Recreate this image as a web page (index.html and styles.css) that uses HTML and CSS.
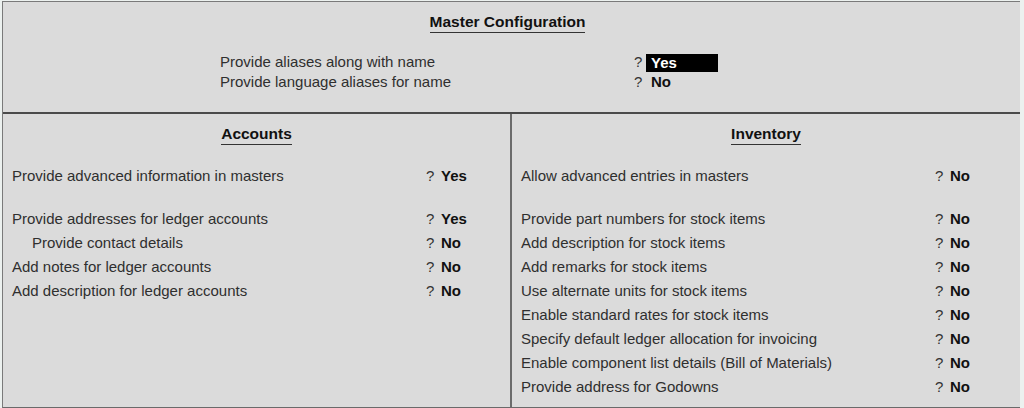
FILE: index.html
```html
<!DOCTYPE html>
<html lang="en">
<head>
<meta charset="utf-8">
<title>Master Configuration</title>
<link rel="stylesheet" href="styles.css">
</head>
<body>
<div class="frame">
  <section class="header">
    <div class="title-wrap"><span class="title">Master Configuration</span></div>
    <div class="hrows">
      <div class="row">
        <span class="label">Provide aliases along with name</span>
        <span class="q">?</span>
        <span class="val hl">Yes</span>
      </div>
      <div class="row">
        <span class="label">Provide language aliases for name</span>
        <span class="q">?</span>
        <span class="val hv">No</span>
      </div>
    </div>
  </section>
  <div class="columns">
    <section class="col col-left">
      <div class="title-wrap col-title"><span class="title">Accounts</span></div>
      <div class="crows">
        <div class="row first"><span class="label">Provide advanced information in masters</span><span class="q">?</span><span class="val">Yes</span></div>
        <div class="row"><span class="label">Provide addresses for ledger accounts</span><span class="q">?</span><span class="val">Yes</span></div>
        <div class="row"><span class="label sub">Provide contact details</span><span class="q">?</span><span class="val">No</span></div>
        <div class="row"><span class="label">Add notes for ledger accounts</span><span class="q">?</span><span class="val">No</span></div>
        <div class="row"><span class="label">Add description for ledger accounts</span><span class="q">?</span><span class="val">No</span></div>
      </div>
    </section>
    <section class="col col-right">
      <div class="title-wrap col-title"><span class="title">Inventory</span></div>
      <div class="crows">
        <div class="row first"><span class="label">Allow advanced entries in masters</span><span class="q">?</span><span class="val">No</span></div>
        <div class="row"><span class="label">Provide part numbers for stock items</span><span class="q">?</span><span class="val">No</span></div>
        <div class="row"><span class="label">Add description for stock items</span><span class="q">?</span><span class="val">No</span></div>
        <div class="row"><span class="label">Add remarks for stock items</span><span class="q">?</span><span class="val">No</span></div>
        <div class="row"><span class="label">Use alternate units for stock items</span><span class="q">?</span><span class="val">No</span></div>
        <div class="row"><span class="label">Enable standard rates for stock items</span><span class="q">?</span><span class="val">No</span></div>
        <div class="row"><span class="label">Specify default ledger allocation for invoicing</span><span class="q">?</span><span class="val">No</span></div>
        <div class="row"><span class="label">Enable component list details (Bill of Materials)</span><span class="q">?</span><span class="val">No</span></div>
        <div class="row"><span class="label">Provide address for Godowns</span><span class="q">?</span><span class="val">No</span></div>
      </div>
    </section>
  </div>
</div>
</body>
</html>
```
FILE: styles.css
```css
html, body {
  margin: 0;
  padding: 0;
}
body {
  background: #ecf1ef;
  font-family: "Liberation Sans", Arial, sans-serif;
  font-size: 15px;
  color: #2f2f2f;
  width: 1024px;
  height: 408px;
  overflow: hidden;
}
.frame {
  margin: 1px 0 0 2px;
  width: 1017px;
  height: 405px;
  background: #dbdbdb;
  border-left: 1px solid #7a7a7a;
  border-top: 1px solid #7a7a7a;
  border-bottom: 2px solid #6a6a6a;
  display: flex;
  flex-direction: column;
}
.header {
  height: 110px;
  border-bottom: 2px solid #4a4a4a;
  display: flex;
  flex-direction: column;
}
.title-wrap {
  text-align: center;
  padding-top: 11px;
  padding-right: 8px;
}
.title {
  display: inline-block;
  font-weight: bold;
  font-size: 15.5px;
  line-height: 18px;
  color: #111;
  padding-bottom: 1px;
  border-bottom: 1px solid #333;
}
.hrows {
  margin-top: 19px;
  padding-left: 217px;
}
.hrows .row {
  height: 20px;
  line-height: 20px;
}
.row {
  display: flex;
  align-items: flex-start;
  white-space: nowrap;
}
.label {
  width: 414px;
  flex: none;
}
.label.sub {
  padding-left: 20px;
  width: 394px;
}
.q {
  width: 8px;
  flex: none;
  color: #333;
}
.val {
  font-weight: bold;
  color: #111;
  margin-left: 7px;
}
.hrows .val {
  margin-left: 4px;
  padding-left: 5px;
}
.hrows .val.hl {
  width: 67px;
  height: 18px;
  line-height: 18px;
  margin-top: 2px;
  background: #000;
  color: #fff;
}
.columns {
  flex: 1;
  display: grid;
  grid-template-columns: 509px 1fr;
}
.col-left {
  border-right: 2px solid #6b6b6b;
}
.col-title {
  padding-right: 0;
}
.crows {
  margin-top: 19px;
  padding-left: 9px;
}
.crows .row {
  height: 24px;
  line-height: 24px;
}
.crows .row.first {
  margin-bottom: 19px;
}
```
